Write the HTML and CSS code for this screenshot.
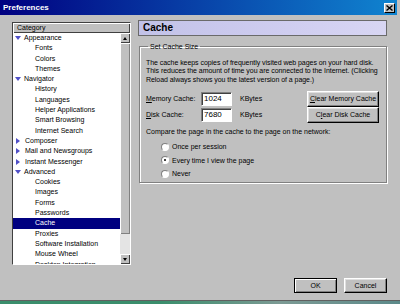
FILE: index.html
```html
<!DOCTYPE html>
<html lang="en">
<head>
    <meta charset="UTF-8">
    <title>Preferences</title>
    <link rel="stylesheet" href="styles.css">
</head>
<body>
    <div class="window">
        <div class="titlebar">
            <span class="title">Preferences</span>
            <span class="close">
                <svg width="7" height="6" viewBox="0 0 7 6"><path d="M0.5 0.5 L6.5 5.5 M6.5 0.5 L0.5 5.5" stroke="#000" stroke-width="1.4"/></svg>
            </span>
        </div>

        <div class="content">
            <div class="category">
                <div class="cat-head">Category</div>
                <div class="cat-body">
                    <ul class="tree">
                        <li class="node open">Appearance</li>
                        <li class="leaf">Fonts</li>
                        <li class="leaf">Colors</li>
                        <li class="leaf">Themes</li>
                        <li class="node open">Navigator</li>
                        <li class="leaf">History</li>
                        <li class="leaf">Languages</li>
                        <li class="leaf">Helper Applications</li>
                        <li class="leaf">Smart Browsing</li>
                        <li class="leaf">Internet Search</li>
                        <li class="node">Composer</li>
                        <li class="node">Mail and Newsgroups</li>
                        <li class="node">Instant Messenger</li>
                        <li class="node open">Advanced</li>
                        <li class="leaf">Cookies</li>
                        <li class="leaf">Images</li>
                        <li class="leaf">Forms</li>
                        <li class="leaf">Passwords</li>
                        <li class="leaf selected">Cache</li>
                        <li class="leaf">Proxies</li>
                        <li class="leaf">Software Installation</li>
                        <li class="leaf">Mouse Wheel</li>
                        <li class="leaf">Desktop Integration</li>
                    </ul>
                    <div class="scrollbar">
                        <div class="sb-btn"><span class="arrow up"></span></div>
                        <div class="sb-thumb"></div>
                        <div class="sb-track"></div>
                        <div class="sb-btn"><span class="arrow down"></span></div>
                    </div>
                </div>
            </div>

            <div class="panel">
                <div class="panel-head">Cache</div>
                <fieldset class="group">
                    <legend>Set Cache Size</legend>
                    <p class="desc">The cache keeps copies of frequently visited web pages on your hard disk.<br>
                    This reduces the amount of time you are connected to the Internet. (Clicking<br>
                    Reload always shows you the latest version of a page.)</p>

                    <div class="cache-grid">
                        <span class="label"><u>M</u>emory Cache:</span>
                        <span class="field">1024</span>
                        <span class="unit">KBytes</span>
                        <span class="btn wide"><u>C</u>lear Memory Cache</span>

                        <span class="label"><u>D</u>isk Cache:</span>
                        <span class="field">7680</span>
                        <span class="unit">KBytes</span>
                        <span class="btn wide">C<u>l</u>ear Disk Cache</span>
                    </div>

                    <p class="compare">Compare the page in the cache to the page on the network:</p>
                    <div class="radios">
                        <div class="radio"><span class="dot"></span>Once per session</div>
                        <div class="radio checked"><span class="dot"></span>Every time I view the page</div>
                        <div class="radio"><span class="dot"></span>Never</div>
                    </div>
                </fieldset>
            </div>
        </div>

        <div class="footer">
            <span class="btn small default">OK</span>
            <span class="btn small">Cancel</span>
        </div>
        <div class="taskbar"></div>
    </div>
</body>
</html>
```

FILE: styles.css
```css
body {
    margin: 0;
    background: #c0c0c0;
    font-family: "Liberation Sans", Arial, sans-serif;
    font-size: 7px;
    color: #000;
    overflow: hidden;
}
.window {
    width: 400px;
    height: 304px;
    display: flex;
    flex-direction: column;
    background: #c0c0c0;
}
.titlebar {
    height: 15px;
    margin-right: 3px;
    display: flex;
    align-items: center;
    justify-content: space-between;
    background: linear-gradient(to right, #000080, #1084d0);
    flex-shrink: 0;
}
.title {
    color: #fff;
    font-weight: bold;
    font-size: 8px;
    padding-left: 3px;
}
.close {
    width: 9px;
    height: 8px;
    margin-right: 2px;
    display: flex;
    align-items: center;
    justify-content: center;
    background: #c0c0c0;
    border: 1px solid;
    border-color: #fff #000 #000 #fff;
}
.content {
    height: 257px;
    display: flex;
    align-items: flex-start;
    flex-shrink: 0;
}

/* category tree */
.category {
    width: 117px;
    height: 241px;
    margin: 7px 0 0 12px;
    border: 1px solid;
    border-color: #404040 #fff #fff #404040;
    display: flex;
    flex-direction: column;
}
.cat-head {
    height: 10px;
    line-height: 10px;
    padding-left: 4px;
    background: #c0c0c0;
    box-shadow: inset 1px 1px #fff, inset -1px -1px #404040;
}
.cat-body {
    flex: 1;
    display: flex;
    min-height: 0;
}
.tree {
    flex: 1;
    margin: 0;
    padding: 0;
    list-style: none;
    background: #fff;
    overflow: hidden;
}
.tree li {
    height: 10.31px;
    line-height: 10.31px;
    white-space: nowrap;
}
.tree .node {
    padding-left: 2px;
}
.tree .node::before {
    content: '';
    display: inline-block;
    width: 0;
    height: 0;
    margin-right: 5px;
    border-left: 4px solid #5050c8;
    border-top: 3px solid transparent;
    border-bottom: 3px solid transparent;
    vertical-align: -1px;
    margin-left: 1px;
}
.tree .node.open::before {
    margin-left: 0;
    margin-right: 3px;
    border-left: 3px solid transparent;
    border-right: 3px solid transparent;
    border-top: 4px solid #5050c8;
    border-bottom: 0;
    vertical-align: 0;
}
.tree .leaf {
    padding-left: 22px;
}
.tree .selected {
    background: #000080;
    color: #fff;
}
.scrollbar {
    width: 10px;
    display: flex;
    flex-direction: column;
    background: #c0c0c0;
}
.sb-btn {
    height: 10px;
    display: flex;
    align-items: center;
    justify-content: center;
    box-shadow: inset 1px 1px #fff, inset -1px -1px #404040;
}
.sb-thumb {
    flex: 1;
    box-shadow: inset 1px 1px #fff, inset -1px -1px #808080;
}
.sb-track {
    height: 20px;
    background: #e4e4e4;
}
.arrow {
    width: 0;
    height: 0;
    border-left: 2.5px solid transparent;
    border-right: 2.5px solid transparent;
}
.arrow.up {
    border-bottom: 3px solid #000;
}
.arrow.down {
    border-top: 3px solid #000;
}

/* right panel */
.panel {
    width: 249px;
    margin: 5px 0 0 7px;
}
.panel-head {
    height: 14px;
    line-height: 14px;
    padding-left: 4px;
    border: 1px solid #6a6a6a;
    background: linear-gradient(to right, #c2c2e8, #cfcdf0 60%, #d8d6f3);
    font-size: 10px;
    font-weight: bold;
}
.group {
    margin: 6px 0 0 1px;
    padding: 0 7px 2px 6px;
    border: 1px solid #808080;
    box-shadow: 1px 1px #fff, inset 1px 1px #fff;
}
.group legend {
    padding: 0 2px;
    margin-left: 2px;
    line-height: 9px;
}
.group p {
    margin: 0;
    line-height: 8.6px;
    white-space: nowrap;
}
.desc {
    padding-top: 7.5px;
    letter-spacing: -0.05px;
}
.cache-grid {
    margin-top: 6.5px;
    display: grid;
    grid-template-columns: 55px 31px 1fr 72px;
    grid-template-rows: 16px 16px;
    align-items: center;
}
.label {
    line-height: 10px;
}
.field {
    height: 12px;
    line-height: 12px;
    padding-left: 2px;
    font-size: 8px;
    background: #fff;
    border: 1px solid;
    border-color: #808080 #fff #fff #808080;
    box-shadow: inset 1px 1px #404040;
}
.unit {
    padding-left: 8px;
}
.btn {
    display: flex;
    align-items: center;
    justify-content: center;
    background: #c0c0c0;
    border: 1px solid;
    border-color: #fff #000 #000 #fff;
    box-shadow: inset -1px -1px #808080, inset 1px 1px #dfdfdf;
    box-sizing: border-box;
}
.btn.wide {
    height: 16px;
}
.compare {
    margin-top: 5.5px !important;
}
.radios {
    margin-top: 3px;
    padding-left: 15px;
}
.radio {
    height: 13.5px;
    display: flex;
    align-items: center;
}
.dot {
    width: 6px;
    height: 6px;
    margin-right: 3px;
    border-radius: 50%;
    background: #fff;
    border: 1px solid;
    border-color: #808080 #fff #fff #808080;
    display: flex;
    align-items: center;
    justify-content: center;
}
.checked .dot::after {
    content: '';
    width: 2px;
    height: 2px;
    border-radius: 50%;
    background: #000;
}

/* bottom */
.footer {
    flex: 1;
    display: flex;
    justify-content: flex-end;
    align-items: flex-start;
    gap: 7px;
    padding: 6px 13px 0 0;
}
.btn.small {
    width: 43px;
    height: 15px;
}
.btn.default {
    outline: 1px solid #000;
    outline-offset: -1px;
    border-color: #000;
    box-shadow: inset 1px 1px #fff, inset -1px -1px #808080;
}
.taskbar {
    height: 3px;
    border-top: 1px solid #606060;
    background: linear-gradient(to right, #3a8e6c 40%, #7c9a94 70%, #5c8a8a);
}
```
